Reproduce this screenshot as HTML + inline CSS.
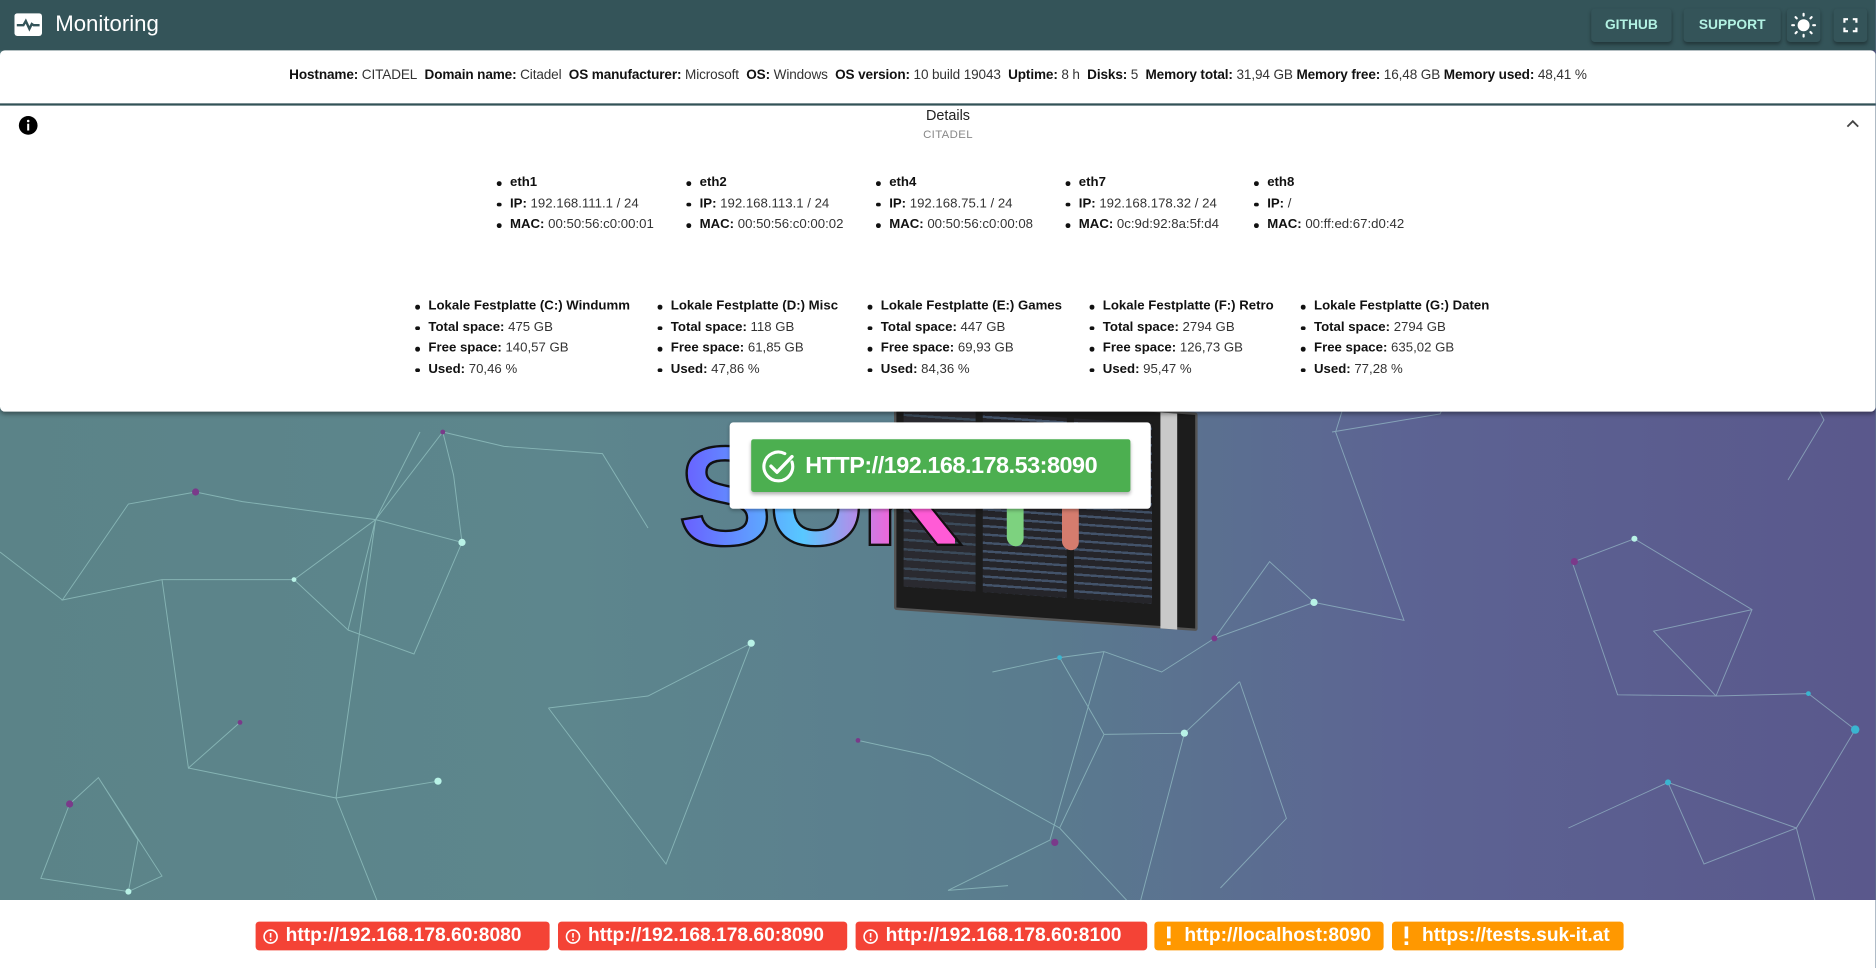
<!DOCTYPE html>
<html><head><meta charset="utf-8">
<style>
*{margin:0;padding:0;box-sizing:border-box}
html,body{width:1876px;height:968px;overflow:hidden;background:#5c7a8c}
body{font-family:"Liberation Sans",Roboto,sans-serif;}
#w{position:absolute;left:0;top:0;width:1563.34px;height:806.67px;transform:scale(1.2);transform-origin:0 0;overflow:hidden;
background:linear-gradient(90deg,#5b8388 0%,#5d868d 30%,#5a7c8e 55%,#5c6393 75%,#5a588c 100%);}
.hdr{position:absolute;left:0;top:0;width:100%;height:42px;background:#345459;box-shadow:0 2px 4px rgba(0,0,0,.3)}
.hdr .t{position:absolute;left:46px;top:9px;color:#fff;font-size:18.5px}
.btn{position:absolute;top:7px;height:28px;background:#345459;border-radius:3px;box-shadow:0 2px 3px rgba(0,0,0,.35);color:#b2f1e2;font-weight:bold;font-size:11.5px;text-align:center;line-height:28px}
.info{position:absolute;left:0;top:42px;width:100%;height:46px;background:#fff;border-bottom:2.5px solid #345459;border-radius:4px 4px 0 0;font-size:11.3px;letter-spacing:-0.1px;text-align:center;line-height:42px;color:#333}
.info b{color:#111}
.det{position:absolute;left:0;top:88px;width:100%;height:255px;background:#fff;box-shadow:0 2px 4px rgba(0,0,0,.4);border-radius:0 0 4px 4px}
ul{position:absolute;list-style:none;font-size:11px;color:#333}
ul li{height:17.5px;line-height:17.5px;position:relative;padding-left:11px;white-space:nowrap}
ul li:before{content:"";position:absolute;left:0;top:7px;width:3.5px;height:3.5px;border-radius:50%;background:#111}
ul b{color:#111}
.card{position:absolute;left:608px;top:352px;width:351px;height:72px;background:#fff;border-radius:3px;box-shadow:0 1px 3px rgba(0,0,0,.3)}
.green{position:absolute;left:18px;top:14px;width:316px;height:44px;background:#4caf50;border-radius:2px;box-shadow:0 2px 3px rgba(0,0,0,.3);color:#fff;font-weight:bold;font-size:19.5px;letter-spacing:-0.4px;line-height:44px;padding-left:45px;white-space:nowrap}
.foot{position:absolute;left:0;top:750px;width:100%;height:57px;background:#fff}
.bd{position:absolute;top:18px;height:24px;border-radius:3px;color:#fff;font-weight:bold;font-size:16px;line-height:24px;padding-left:25px;white-space:nowrap}
.r{background:#f44336}.o{background:#ff9800}
</style></head><body><div id="w">
<svg style="position:absolute;left:0;top:0" width="1563" height="807" viewBox="0 0 1563 807">
<g stroke="#b8eee6" stroke-opacity=".45" stroke-width=".8" fill="none">
<path d="M163 410 L202 418 L313 433 L385 452 L378 396 L369 360 L313 433 L245 483 L135 483 L52 500 L107 420 L163 410 M245 483 L290 525 L313 433 M290 525 L345 545 L385 452 M135 483 L157 640 L200 602 M313 433 L350 360 M369 360 L420 372 L502 378 L540 440 M313 433 L280 665 L365 651 M280 665 L330 790 M0 460 L52 500 M457 590 L540 580 L626 536 L555 720 L457 590 M157 640 L280 665"/>
<path d="M58 670 L82 648 L135 730 L107 743 L34 732 L58 670 M82 648 L115 700 L107 743"/>
<path d="M827 560 L883 548 L920 543 L968 560 L1012 532 L1095 502 L1170 517 L1113 360 L1130 305 M883 548 L920 612 L987 611 L1033 568 M920 612 L883 690 L948 760 M1095 502 L1058 468 L1012 532 M1033 568 L1072 682 L1017 740 M920 543 L875 700 L790 742 L840 738 M987 611 L948 760 M715 617 L775 630 L883 690 M1110 360 L1200 345 L1220 305"/>
<path d="M1312 468 L1362 449 L1460 508 L1430 580 L1348 579 L1310 468 M1430 580 L1507 578 L1546 608 L1497 690 L1390 652 L1307 690 M1390 652 L1420 720 L1497 690 L1520 780 M1430 580 L1378 526 L1460 508 M1490 290 L1520 350 L1490 400"/>
</g>
<g fill="#b8f2e6"><circle cx="385" cy="452" r="3"/><circle cx="245" cy="483" r="2"/><circle cx="626" cy="536" r="3"/><circle cx="365" cy="651" r="3"/><circle cx="107" cy="743" r="2.5"/><circle cx="987" cy="611" r="3"/><circle cx="1095" cy="502" r="3"/><circle cx="1362" cy="449" r="2.5"/></g>
<g fill="#7a3a8a"><circle cx="163" cy="410" r="3"/><circle cx="369" cy="360" r="2"/><circle cx="58" cy="670" r="3"/><circle cx="1312" cy="468" r="3"/><circle cx="1012" cy="532" r="2.5"/><circle cx="879" cy="702" r="3"/><circle cx="200" cy="602" r="2"/><circle cx="715" cy="617" r="2"/></g>
<g fill="#3ab5d0"><circle cx="1546" cy="608" r="3.5"/><circle cx="1507" cy="578" r="2"/><circle cx="1390" cy="652" r="2.5"/><circle cx="883" cy="548" r="2"/></g>
</svg>
<div style="position:absolute;left:745px;top:335px;width:253px;height:182px;background:#1c1c1c;transform:skewY(4deg);border:2px solid #555;border-radius:2px">
 <div style="position:absolute;left:6px;top:10px;width:60px;height:150px;background:repeating-linear-gradient(0deg,#2a2a30 0 6px,#3b4a5a 6px 8px)"></div>
 <div style="position:absolute;left:72px;top:10px;width:70px;height:150px;background:repeating-linear-gradient(0deg,#25252a 0 5px,#43536a 5px 7px)"></div>
 <div style="position:absolute;left:148px;top:10px;width:65px;height:150px;background:repeating-linear-gradient(0deg,#25252a 0 5px,#43536a 5px 7px)"></div>
 <div style="position:absolute;left:220px;top:0;width:14px;height:180px;background:#c9c9c9"></div>
 <div style="position:absolute;left:92px;top:60px;width:14px;height:60px;background:#7dd27f;border-radius:7px"></div>
 <div style="position:absolute;left:138px;top:60px;width:14px;height:60px;background:#d57c6e;border-radius:7px"></div>
</div>
<div style="position:absolute;left:565px;top:355px;font-size:118px;font-weight:bold;letter-spacing:-6px;line-height:1;background:linear-gradient(90deg,#6a5cff,#58c8ff 45%,#ff5bd6 80%);-webkit-background-clip:text;color:transparent;-webkit-text-stroke:2px #111">SUK</div>

<div class="hdr">
 <svg style="position:absolute;left:12px;top:11px" width="23" height="19" viewBox="0 0 23 19"><rect width="23" height="19" rx="2.5" fill="#fff"/><path d="M2 10 H7.5 L9.5 6.5 L12.5 13 L14.5 9 L16 10 H21" stroke="#345459" stroke-width="2" fill="none"/></svg>
 <div class="t">Monitoring</div>
 <div class="btn" style="left:1326px;width:67px">GITHUB</div>
 <div class="btn" style="left:1403px;width:81px">SUPPORT</div>
 <div class="btn" style="left:1489px;width:28px"><svg width="28" height="28" viewBox="0 0 28 28" style="display:block"><circle cx="14" cy="14" r="5" fill="#fff"/><g stroke="#fff" stroke-width="1.8" stroke-linecap="round"><path d="M14 4.5v1.5M14 22v1.5M4.5 14h1.5M22 14h1.5M7.3 7.3l1 1M19.7 19.7l1 1M7.3 20.7l1-1M19.7 8.3l1-1"/></g></svg></div>
 <div class="btn" style="left:1528px;width:28px"><svg width="28" height="28" viewBox="0 0 28 28" style="display:block"><path d="M9 12V9h3M16 9h3v3M19 16v3h-3M12 19H9v-3" stroke="#fff" stroke-width="1.8" fill="none"/></svg></div>
</div>

<div class="info"><b>Hostname:</b> CITADEL&nbsp; <b>Domain name:</b> Citadel&nbsp; <b>OS manufacturer:</b> Microsoft&nbsp; <b>OS:</b> Windows&nbsp; <b>OS version:</b> 10 build 19043&nbsp; <b>Uptime:</b> 8 h&nbsp; <b>Disks:</b> 5&nbsp; <b>Memory total:</b> 31,94 GB <b>Memory free:</b> 16,48 GB <b>Memory used:</b> 48,41 %</div>

<div class="det">
 <svg style="position:absolute;left:15px;top:8px" width="17" height="17" viewBox="0 0 24 24"><circle cx="12" cy="12" r="11" fill="#000"/><rect x="10.8" y="10" width="2.4" height="8" fill="#fff"/><circle cx="12" cy="6.8" r="1.5" fill="#fff"/></svg>
 <div style="position:absolute;left:0;width:1580px;top:1px;text-align:center;font-size:12px;color:#222">Details</div>
 <div style="position:absolute;left:0;width:1580px;top:19px;text-align:center;font-size:9.5px;color:#888;letter-spacing:.3px">CITADEL</div>
 <svg style="position:absolute;left:1538px;top:11px" width="12" height="8" viewBox="0 0 12 8"><path d="M1.5 6.5 L6 2 L10.5 6.5" stroke="#444" stroke-width="1.5" fill="none"/></svg>

 <ul style="left:414px;top:56px"><li><b>eth1</b></li><li><b>IP:</b> 192.168.111.1 / 24</li><li><b>MAC:</b> 00:50:56:c0:00:01</li></ul>
 <ul style="left:572px;top:56px"><li><b>eth2</b></li><li><b>IP:</b> 192.168.113.1 / 24</li><li><b>MAC:</b> 00:50:56:c0:00:02</li></ul>
 <ul style="left:730px;top:56px"><li><b>eth4</b></li><li><b>IP:</b> 192.168.75.1 / 24</li><li><b>MAC:</b> 00:50:56:c0:00:08</li></ul>
 <ul style="left:888px;top:56px"><li><b>eth7</b></li><li><b>IP:</b> 192.168.178.32 / 24</li><li><b>MAC:</b> 0c:9d:92:8a:5f:d4</li></ul>
 <ul style="left:1045px;top:56px"><li><b>eth8</b></li><li><b>IP:</b> /</li><li><b>MAC:</b> 00:ff:ed:67:d0:42</li></ul>

 <ul style="left:346px;top:159px"><li><b>Lokale Festplatte (C:) Windumm</b></li><li><b>Total space:</b> 475 GB</li><li><b>Free space:</b> 140,57 GB</li><li><b>Used:</b> 70,46 %</li></ul>
 <ul style="left:548px;top:159px"><li><b>Lokale Festplatte (D:) Misc</b></li><li><b>Total space:</b> 118 GB</li><li><b>Free space:</b> 61,85 GB</li><li><b>Used:</b> 47,86 %</li></ul>
 <ul style="left:723px;top:159px"><li><b>Lokale Festplatte (E:) Games</b></li><li><b>Total space:</b> 447 GB</li><li><b>Free space:</b> 69,93 GB</li><li><b>Used:</b> 84,36 %</li></ul>
 <ul style="left:908px;top:159px"><li><b>Lokale Festplatte (F:) Retro</b></li><li><b>Total space:</b> 2794 GB</li><li><b>Free space:</b> 126,73 GB</li><li><b>Used:</b> 95,47 %</li></ul>
 <ul style="left:1084px;top:159px"><li><b>Lokale Festplatte (G:) Daten</b></li><li><b>Total space:</b> 2794 GB</li><li><b>Free space:</b> 635,02 GB</li><li><b>Used:</b> 77,28 %</li></ul>
</div>

<div class="card"><div class="green">
 <svg style="position:absolute;left:8px;top:8px" width="30" height="30" viewBox="0 0 30 30"><path d="M26 11 A12 12 0 1 1 20 4" stroke="#fff" stroke-width="2.6" fill="none" stroke-linecap="round"/><path d="M8.5 14.5 L13.5 19.5 L26 6.5" stroke="#fff" stroke-width="2.8" fill="none" stroke-linecap="round" stroke-linejoin="round"/></svg>
 HTTP://192.168.178.53:8090</div></div>

<div class="foot">
 <div class="bd r" style="left:213px;width:245px">http://192.168.178.60:8080</div>
 <div class="bd r" style="left:465px;width:241px">http://192.168.178.60:8090</div>
 <div class="bd r" style="left:713px;width:243px">http://192.168.178.60:8100</div>
 <div class="bd o" style="left:962px;width:191px">http://localhost:8090</div>
 <div class="bd o" style="left:1160px;width:193px">https://tests.suk-it.at</div>
 <svg style="position:absolute;left:219px;top:24px" width="13" height="13" viewBox="0 0 24 24"><circle cx="12" cy="12" r="10" stroke="#fff" stroke-width="2.5" fill="none"/><path d="M12 6.5v7" stroke="#fff" stroke-width="2.5"/><circle cx="12" cy="17" r="1.5" fill="#fff"/></svg>
 <svg style="position:absolute;left:471px;top:24px" width="13" height="13" viewBox="0 0 24 24"><circle cx="12" cy="12" r="10" stroke="#fff" stroke-width="2.5" fill="none"/><path d="M12 6.5v7" stroke="#fff" stroke-width="2.5"/><circle cx="12" cy="17" r="1.5" fill="#fff"/></svg>
 <svg style="position:absolute;left:719px;top:24px" width="13" height="13" viewBox="0 0 24 24"><circle cx="12" cy="12" r="10" stroke="#fff" stroke-width="2.5" fill="none"/><path d="M12 6.5v7" stroke="#fff" stroke-width="2.5"/><circle cx="12" cy="17" r="1.5" fill="#fff"/></svg>
 <svg style="position:absolute;left:970px;top:22px" width="8" height="16" viewBox="0 0 8 16"><rect x="2.5" y="0" width="3" height="10" fill="#fff"/><rect x="2.5" y="12.5" width="3" height="3" fill="#fff"/></svg>
 <svg style="position:absolute;left:1168px;top:22px" width="8" height="16" viewBox="0 0 8 16"><rect x="2.5" y="0" width="3" height="10" fill="#fff"/><rect x="2.5" y="12.5" width="3" height="3" fill="#fff"/></svg>
</div>
</div></body></html>
